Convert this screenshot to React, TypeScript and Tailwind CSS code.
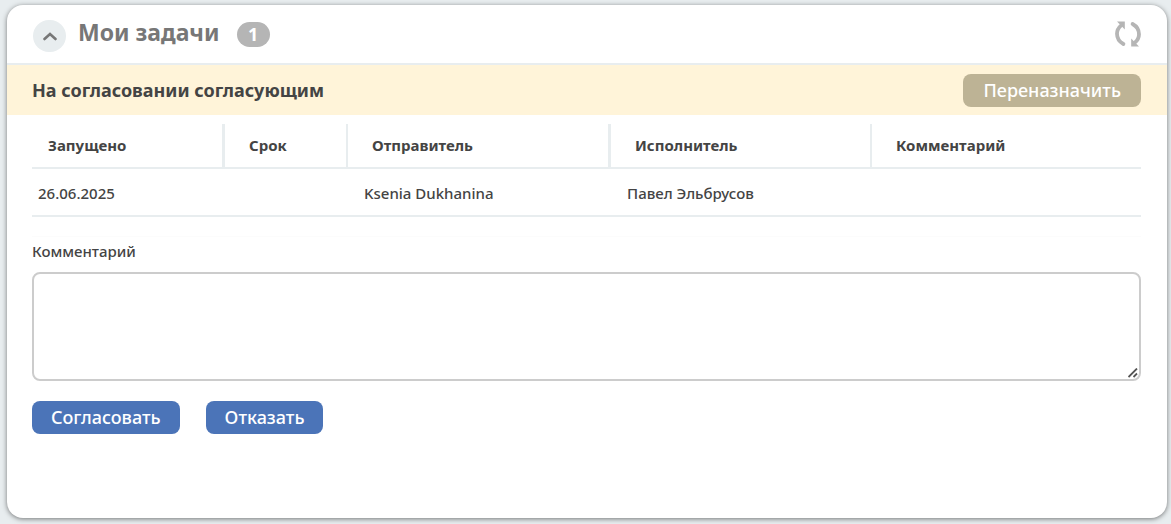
const columns = [
  { title: "Запущено", value: "26.06.2025", head: "w-[193px] border-r-3 pl-4", cell: "pl-1.5" },
  { title: "Срок", value: "", head: "w-[123px] border-r-2 pl-6", cell: "pl-4" },
  { title: "Отправитель", value: "Ksenia Dukhanina", head: "w-[263px] border-r-3 pl-6", cell: "pl-4" },
  { title: "Исполнитель", value: "Павел Эльбрусов", head: "w-[261px] border-r-2 pl-6", cell: "pl-4" },
  { title: "Комментарий", value: "", head: "pl-6", cell: "pl-4" },
];

function RefreshIcon() {
  return (
    <svg viewBox="0 0 26 26" className="h-[26px] w-[26px]" fill="none" aria-hidden="true">
      <path d="M8.4 23C4.4 20.8 2 17.4 2 12.8C2 9.4 3.6 6.6 6.2 4.4" stroke="#b5b5b5" strokeWidth="3.8" strokeLinecap="round" />
      <path d="M2 0.6H9.8V8.4Z" fill="#b5b5b5" />
      <path d="M17.6 3C21.6 5.2 24 8.6 24 13.2C24 16.6 22.4 19.4 19.8 21.6" stroke="#b5b5b5" strokeWidth="3.8" strokeLinecap="round" />
      <path d="M16.2 17.6V25.4H24Z" fill="#b5b5b5" />
    </svg>
  );
}

export default function App() {
  return (
    <div className="flex min-h-screen flex-col bg-[#e8edef] pt-[5px] pr-1 pb-1.5 pl-[7px] font-['Noto_Sans',sans-serif] text-[#444]">
      <section className="flex-1 overflow-hidden rounded-2xl bg-white shadow-[0_1px_5px_rgba(0,0,0,0.5)]">
        <header className="flex h-15 items-center border-b-2 border-[#e8edef] px-[26px]">
          <button type="button" aria-label="Свернуть" className="mt-1 flex h-8 w-[33px] items-center justify-center rounded-full bg-[#e8edef]">
            <svg viewBox="0 0 14 9" className="h-[9px] w-[14px]" fill="none" aria-hidden="true">
              <path d="M1.5 7L7 2L12.5 7" stroke="#777" strokeWidth="2.6" strokeLinecap="round" />
            </svg>
          </button>
          <h1 className="ml-3 pb-1 text-[23px] font-bold text-[#777]">Мои задачи</h1>
          <span className="ml-[17px] flex h-[25px] w-[33px] items-center justify-center rounded-full bg-[#b5b5b5] text-lg font-bold text-white">1</span>
          <button type="button" aria-label="Обновить" className="ml-auto">
            <RefreshIcon />
          </button>
        </header>

        <div className="flex h-[50px] items-center justify-between bg-[#fff4d9] pr-[26px] pl-[25px]">
          <h2 className="text-lg font-bold">На согласовании согласующим</h2>
          <button type="button" className="h-[33px] rounded-lg bg-[#bdb395] px-5 text-lg font-medium text-white">Переназначить</button>
        </div>

        <div className="pt-[9px] pr-[26px] pb-6 pl-[25px]">
          <table className="w-full table-fixed border-separate border-spacing-0 text-left text-[15px]">
            <thead>
              <tr>
                {columns.map((c) => (
                  <th key={c.title} scope="col" className={`h-[43px] border-[#e8edef] p-0 font-bold ${c.head}`}>
                    {c.title}
                  </th>
                ))}
              </tr>
            </thead>
            <tbody>
              <tr>
                {columns.map((c) => (
                  <td key={c.title} className={`h-[50px] border-y-2 border-[#e8edef] p-0 pt-0.5 font-medium ${c.cell}`}>
                    {c.value}
                  </td>
                ))}
              </tr>
            </tbody>
          </table>

          <form className="mt-[19px] border-t border-[#fcfcfc] pt-1" onSubmit={(e) => e.preventDefault()}>
            <label htmlFor="comment" className="block text-[15px] leading-5 font-medium">Комментарий</label>
            <div className="relative mt-[11px]">
              <textarea id="comment" className="block h-[109px] w-full resize-none rounded-lg border-2 border-[#ccc] bg-white p-2 text-[15px] outline-none" />
              <svg viewBox="0 0 10 10" className="pointer-events-none absolute right-[3px] bottom-[3px] h-2.5 w-2.5" fill="none" aria-hidden="true">
                <path d="M0.5 9L9 0.5M5.5 9L9 5.5" stroke="#555" strokeWidth="1.8" />
              </svg>
            </div>
            <div className="mt-5 flex gap-[26px]">
              <button type="submit" className="h-[33px] rounded-lg bg-[#4b74b8] px-[19px] pb-0.5 text-lg font-medium text-white">Согласовать</button>
              <button type="button" className="h-[33px] rounded-lg bg-[#4b74b8] px-[19px] pb-0.5 text-lg font-medium text-white">Отказать</button>
            </div>
          </form>
        </div>
      </section>
    </div>
  );
}
